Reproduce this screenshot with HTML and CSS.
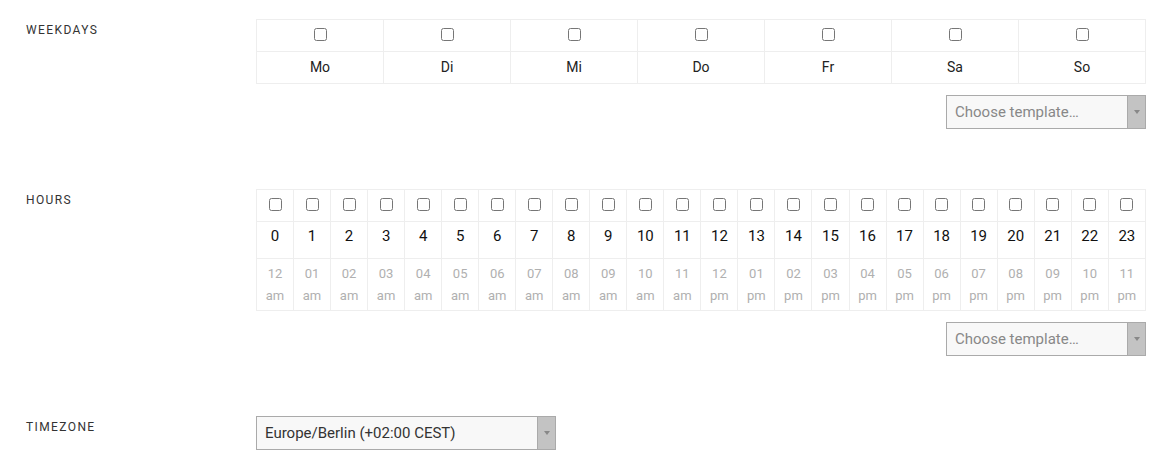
FILE: index.html
```html
<!DOCTYPE html>
<html lang="de">
<head>
  <meta charset="UTF-8" />
  <meta name="viewport" content="width=device-width, initial-scale=1" />
  <title>Schedule</title>
  <link rel="stylesheet" href="styles.css">
</head>
<body>

<div class="form">
  <div class="form-row">
    <div class="form-label">Weekdays</div>
    <div class="form-field">
      <table class="grid days">
        <tr class="check-row">
          <td><input type="checkbox" /></td>
          <td><input type="checkbox" /></td>
          <td><input type="checkbox" /></td>
          <td><input type="checkbox" /></td>
          <td><input type="checkbox" /></td>
          <td><input type="checkbox" /></td>
          <td><input type="checkbox" /></td>
        </tr>
        <tr class="name-row">
          <td>Mo</td><td>Di</td><td>Mi</td><td>Do</td><td>Fr</td><td>Sa</td><td>So</td>
        </tr>
      </table>
      <div class="template">
        <div class="select-box">
          <select class="select template-select">
            <option>Choose template…</option>
          </select>
          <span class="select-arrow"></span>
        </div>
      </div>
    </div>
  </div>

  <div class="form-row">
    <div class="form-label">Hours</div>
    <div class="form-field">
      <table class="grid hours" id="hours"></table>
      <div class="template">
        <div class="select-box">
          <select class="select template-select">
            <option>Choose template…</option>
          </select>
          <span class="select-arrow"></span>
        </div>
      </div>
    </div>
  </div>

  <div class="form-row">
    <div class="form-label">Timezone</div>
    <div class="form-field">
      <div class="select-box tz">
        <select class="select">
          <option>Europe/Berlin (+02:00 CEST)</option>
        </select>
        <span class="select-arrow"></span>
      </div>
    </div>
  </div>
</div>

<script>
  // Stundenraster aufbauen
  const table = document.getElementById("hours");
  const checks = document.createElement("tr");
  const nums = document.createElement("tr");
  const times = document.createElement("tr");
  checks.className = "check-row";
  nums.className = "num-row";
  times.className = "time-row";

  for (let h = 0; h < 24; h++) {
    const c = document.createElement("td");
    c.innerHTML = '<input type="checkbox" />';
    checks.appendChild(c);

    const n = document.createElement("td");
    n.textContent = h;
    nums.appendChild(n);

    const h12 = h % 12 === 0 ? 12 : h % 12;
    const t = document.createElement("td");
    t.innerHTML = String(h12).padStart(2, "0") + "<br>" + (h < 12 ? "am" : "pm");
    times.appendChild(t);
  }

  table.appendChild(checks);
  table.appendChild(nums);
  table.appendChild(times);
</script>

</body>
</html>
```

FILE: styles.css
```css
body {
  margin: 0;
  padding: 19px 15px 0 0;
  background: #fff;
  color: #222;
  font-family: Roboto, "Liberation Sans", sans-serif;
  font-size: 14px;
}
.form-row {
  display: grid;
  grid-template-columns: 256px 890px;
  margin-bottom: 60px;
}
.form-row:last-child {
  margin-bottom: 0;
}
.form-label {
  padding: 2px 0 0 26px;
  font-size: 12px;
  line-height: 18px;
  letter-spacing: 1.4px;
  text-transform: uppercase;
  color: #333;
}
.grid {
  width: 890px;
  border-collapse: collapse;
  table-layout: fixed;
}
.grid td {
  border: 1px solid #eee;
  text-align: center;
  padding: 0;
}
.grid input[type="checkbox"] {
  display: block;
  margin: 0 auto;
  width: 13px;
  height: 13px;
}
.check-row td {
  padding-bottom: 3px;
}
.days .check-row td {
  height: 28px;
}
.days .name-row td {
  height: 29px;
  padding-bottom: 2px;
  color: #222;
}
.hours .check-row td {
  height: 28px;
}
.hours .num-row td {
  height: 28px;
  padding-bottom: 8px;
  font-size: 15px;
  color: #111;
}
.hours .time-row td {
  height: 51px;
  font-size: 13px;
  line-height: 22px;
  color: #b0b0b0;
}
.template {
  display: flex;
  justify-content: flex-end;
  margin-top: 11px;
}
.select-box {
  display: flex;
  width: 200px;
  height: 34px;
  box-sizing: border-box;
  border: 1px solid #aaa;
  background: #f8f8f8;
}
.select-box.tz {
  width: 300px;
}
.select {
  flex: 1;
  min-width: 0;
  appearance: none;
  -webkit-appearance: none;
  border: none;
  background: transparent;
  padding: 0 8px;
  font-family: Roboto, "Liberation Sans", sans-serif;
  font-size: 15px;
  color: #333;
  outline: none;
}
.template-select {
  color: #888;
}
.select-arrow {
  width: 17px;
  flex: none;
  border-left: 1px solid #aaa;
  background: #c3c3c3;
  display: flex;
  align-items: center;
  justify-content: center;
}
.select-arrow::after {
  content: "";
  border-left: 3px solid transparent;
  border-right: 3px solid transparent;
  border-top: 4px solid #888;
}
```
